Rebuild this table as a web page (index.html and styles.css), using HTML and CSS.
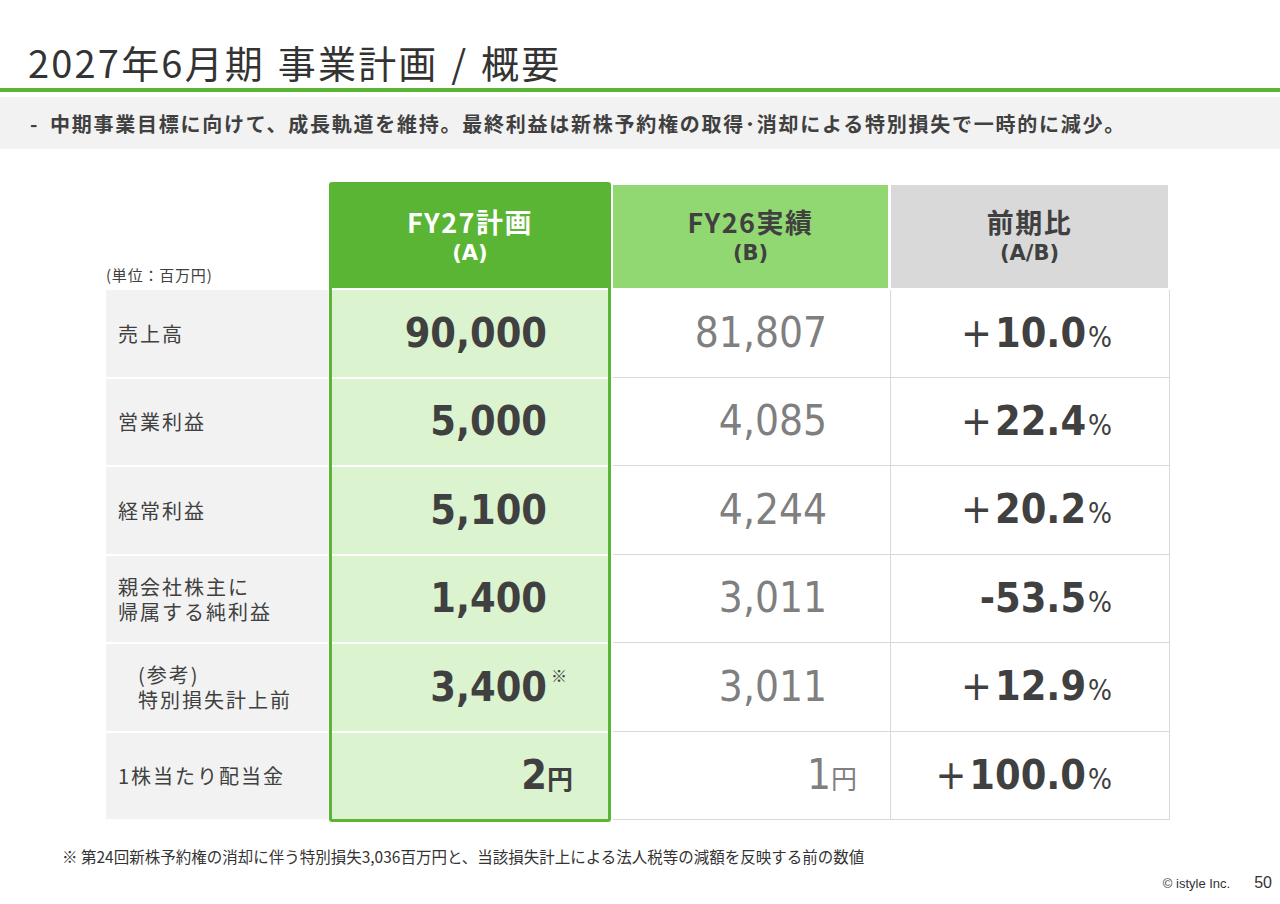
FILE: index.html
```html
<!DOCTYPE html>
<html lang="ja">
<head>
<meta charset="utf-8">
<title>2027年6月期 事業計画 / 概要</title>
<link rel="stylesheet" href="styles.css">
</head>
<body>
<div class="slide">
  <h1 class="title">2027年6月期 事業計画 / 概要</h1>
  <div class="rule"></div>
  <div class="lead"><span class="dash">-</span><span>中期事業目標に向けて、成長軌道を維持。最終利益は新株予約権の取得･消却による特別損失で一時的に減少。</span></div>

  <div class="table">
    <div class="col col-label">
      <div class="head unit">(単位：百万円)</div>
      <div class="cell">売上高</div>
      <div class="cell">営業利益</div>
      <div class="cell">経常利益</div>
      <div class="cell">親会社株主に<br>帰属する純利益</div>
      <div class="cell indent">(参考)<br>特別損失計上前</div>
      <div class="cell">1株当たり配当金</div>
    </div>

    <div class="col col-plan">
      <div class="head"><span class="h1">FY27計画</span><span class="h2">(A)</span></div>
      <div class="cell"><span class="num">90,000</span></div>
      <div class="cell"><span class="num">5,000</span></div>
      <div class="cell"><span class="num">5,100</span></div>
      <div class="cell"><span class="num">1,400</span></div>
      <div class="cell"><span class="num">3,400<span class="mark">※</span></span></div>
      <div class="cell yen"><span class="num">2<span class="unit-yen">円</span></span></div>
    </div>

    <div class="col col-prev">
      <div class="head"><span class="h1">FY26実績</span><span class="h2">(B)</span></div>
      <div class="cell"><span class="num">81,807</span></div>
      <div class="cell"><span class="num">4,085</span></div>
      <div class="cell"><span class="num">4,244</span></div>
      <div class="cell"><span class="num">3,011</span></div>
      <div class="cell"><span class="num">3,011</span></div>
      <div class="cell yen"><span class="num">1<span class="unit-yen">円</span></span></div>
    </div>

    <div class="col col-ratio">
      <div class="head"><span class="h1">前期比</span><span class="h2">(A/B)</span></div>
      <div class="cell"><span class="pct"><span class="sign">+</span>10.0<span class="pc">%</span></span></div>
      <div class="cell"><span class="pct"><span class="sign">+</span>22.4<span class="pc">%</span></span></div>
      <div class="cell"><span class="pct"><span class="sign">+</span>20.2<span class="pc">%</span></span></div>
      <div class="cell"><span class="pct">-53.5<span class="pc">%</span></span></div>
      <div class="cell"><span class="pct"><span class="sign">+</span>12.9<span class="pc">%</span></span></div>
      <div class="cell"><span class="pct"><span class="sign">+</span>100.0<span class="pc">%</span></span></div>
    </div>
  </div>

  <p class="note">※ 第24回新株予約権の消却に伴う特別損失3,036百万円と、当該損失計上による法人税等の減額を反映する前の数値</p>

  <div class="footer">
    <span class="copy">© istyle Inc.</span>
    <span class="page">50</span>
  </div>
</div>
</body>
</html>
```

FILE: styles.css
```css
html, body {
  margin: 0;
  padding: 0;
  background: #ffffff;
}

body {
  font-family: "Noto Sans CJK JP", "Noto Sans", sans-serif;
  color: #404040;
}

.slide {
  width: 1280px;
  height: 904px;
  overflow: hidden;
  display: flex;
  flex-direction: column;
}

.title {
  margin: 40px 0 0 28px;
  font-size: 38px;
  line-height: 44px;
  font-weight: 400;
  color: #333333;
  letter-spacing: 2.2px;
  word-spacing: 2px;
}

.rule {
  margin-top: 4px;
  height: 4px;
  background: #5ab534;
}

.lead {
  margin-top: 5px;
  height: 52px;
  background: #f2f2f2;
  display: flex;
  align-items: center;
  padding-left: 30px;
  font-size: 20px;
  font-weight: 700;
  color: #404040;
  letter-spacing: 1.75px;
}

.lead .dash {
  width: 20px;
  letter-spacing: 0;
}

.table {
  margin-top: 33px;
  margin-left: 106px;
  display: flex;
  align-items: flex-start;
}

.col {
  display: flex;
  flex-direction: column;
}

.head {
  height: 103px;
  display: flex;
  flex-direction: column;
  align-items: center;
  justify-content: center;
  font-weight: 700;
  margin-bottom: 2px;
}

.head .h1 {
  font-size: 27px;
  line-height: 34px;
  letter-spacing: 1.5px;
  margin-top: -2px;
}

.head .h2 {
  font-family: "DejaVu Sans", "Noto Sans CJK JP", sans-serif;
  font-size: 21px;
  line-height: 28px;
}

.cell {
  height: 86.5px;
  box-sizing: border-box;
  display: flex;
  align-items: center;
  justify-content: flex-end;
}

/* label column */
.col-label {
  width: 222px;
  margin-top: 3px;
}

.col-label .unit {
  align-items: flex-start;
  justify-content: flex-end;
  font-size: 15px;
  letter-spacing: 0.8px;
  font-weight: 400;
  padding-bottom: 3px;
  box-sizing: border-box;
  color: #404040;
}

.col-label .cell {
  background: #f2f2f2;
  justify-content: flex-start;
  padding-left: 12px;
  font-size: 20px;
  line-height: 25px;
  letter-spacing: 2px;
  margin-bottom: 2px;
  color: #404040;
}

.col-label .cell.indent {
  padding-left: 32px;
}

/* plan column */
.col-plan {
  margin-left: 1px;
  width: 282px;
  box-sizing: border-box;
  border: 3px solid #5ab534;
  border-radius: 3px;
  background: #ffffff;
}

.col-plan .head {
  background: #5ab534;
  color: #ffffff;
}

.col-plan .cell {
  background: #dbf3cf;
  margin-bottom: 2px;
  padding-right: 61px;
}

.col-plan .cell:last-child {
  margin-bottom: 0;
}

.col-plan .cell.yen {
  padding-right: 35px;
}

.num {
  position: relative;
  font-family: "DejaVu Sans Condensed", "DejaVu Sans", sans-serif;
  font-size: 41px;
  line-height: 1;
}

.col-plan .num {
  font-weight: 700;
  color: #404040;
}

.mark {
  position: absolute;
  left: 100%;
  top: 0;
  margin-left: 4px;
  font-family: "Noto Sans CJK JP", sans-serif;
  font-size: 16px;
  line-height: 16px;
  font-weight: 400;
}

.unit-yen {
  font-family: "Noto Sans CJK JP", sans-serif;
  font-size: 26px;
}

/* previous column */
.col-prev {
  margin-left: 2px;
  margin-top: 3px;
  width: 277px;
}

.col-prev .head {
  background: #92d872;
  color: #404040;
  width: 275px;
}

.col-prev .cell {
  height: 88.5px;
  border-bottom: 1px solid #d9d9d9;
  padding-right: 63px;
}

.col-prev .cell.yen {
  padding-right: 33px;
}

.col-prev .num {
  font-weight: 400;
  font-size: 42px;
  color: #7f7f7f;
}

.col-prev .cell:nth-child(2) {
  height: 87.5px;
}

/* ratio column */
.col-ratio {
  margin-top: 3px;
  width: 280px;
}

.col-ratio .head {
  background: #d9d9d9;
  color: #404040;
  margin-left: 1px;
  width: 277px;
}

.col-ratio .cell {
  height: 88.5px;
  border-left: 1px solid #d9d9d9;
  border-right: 1px solid #d9d9d9;
  border-bottom: 1px solid #d9d9d9;
  padding-right: 57px;
}

.col-ratio .cell:nth-child(2) {
  height: 87.5px;
}

.pct {
  font-family: "DejaVu Sans Condensed", "DejaVu Sans", sans-serif;
  font-size: 41px;
  font-weight: 700;
  line-height: 1;
  color: #404040;
}

.pct .sign {
  font-weight: 400;
  margin-right: 3px;
}

.pct .pc {
  font-size: 28px;
  font-weight: 400;
  margin-left: 2px;
}

.note {
  margin: 24px 0 0 62px;
  font-size: 15.5px;
  line-height: 20px;
  color: #333333;
}

.footer {
  margin-top: 8px;
  display: flex;
  justify-content: flex-end;
  align-items: baseline;
  padding-right: 8px;
  font-family: "Liberation Sans", Arial, sans-serif;
  color: #333333;
}

.footer .copy {
  font-size: 13px;
  margin-right: 24px;
}

.footer .page {
  font-size: 16px;
}
```
